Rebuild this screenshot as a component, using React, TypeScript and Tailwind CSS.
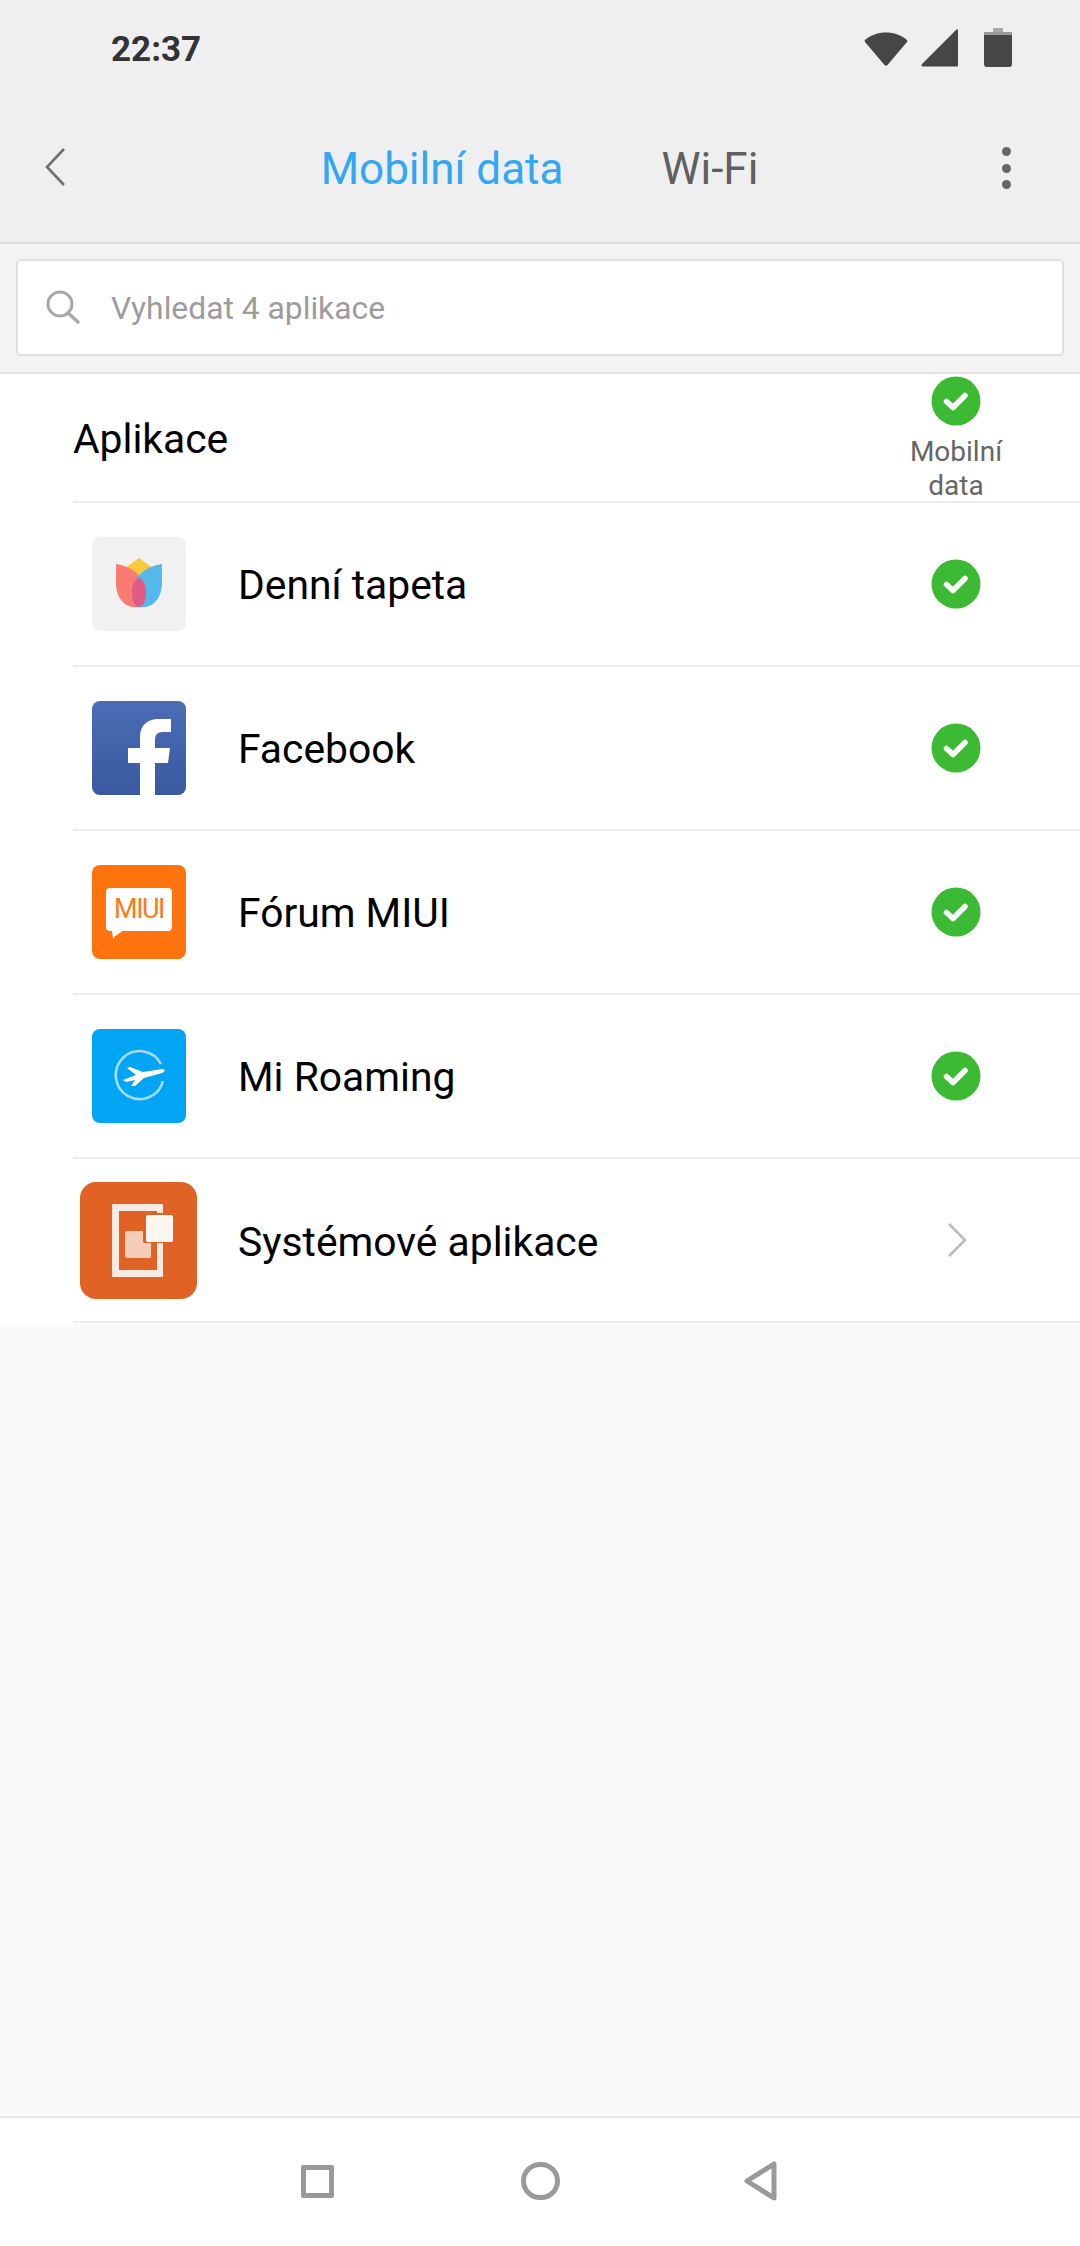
const Check = ({ className = "" }: { className?: string }) => (
  <svg viewBox="0 0 50 50" className={`w-[50px] h-[50px] ${className}`}>
    <circle cx="25" cy="25" r="24.5" fill="#3dba33" />
    <path d="M15.5 25.5 L22 31.5 L34 19.5" fill="none" stroke="#fff" strokeWidth="5.5" strokeLinecap="round" strokeLinejoin="round" />
  </svg>
);

const Tile = ({ children, className }: { children: React.ReactNode; className: string }) => (
  <div className={`w-[94px] h-[94px] rounded-[8px] overflow-hidden ${className}`}>{children}</div>
);

const Tulip = () => (
  <Tile className="bg-[#f1f1f1]">
    <svg viewBox="0 0 94 94" className="w-full h-full">
      <path d="M47 21 L61 31 L47 52 L33 31 Z" fill="#f8cb3e" />
      <path d="M24 27 C38 29 52 38 54 52 C55 62 52 70 47 70 C32 72 24 60 24 46 Z" fill="#fb7a72" />
      <path d="M70 27 C56 29 42 38 40 52 C39 62 42 70 47 70 C62 72 70 60 70 46 Z" fill="#55b9ec" />
      <path d="M47 40 C52 44 54 48 54 54 C54.5 62 52 68 48 70 C47 70.2 46.5 70.2 46 70 C42 68 39.5 62 40 54 C40 48 42 44 47 40 Z" fill="#e25b85" />
    </svg>
  </Tile>
);

const Facebook = () => (
  <Tile className="bg-gradient-to-b from-[#4a6db5] to-[#3a5a9f]">
    <svg viewBox="0 0 94 94" className="w-full h-full">
      <path d="M48 94 V62 H36 V47 H48 V36 C48 24 56 18 66 18 H79 V31 H71 C65 31 63 34 63 39 V47 H78 L76 62 H63 V94 Z" fill="#fff" />
    </svg>
  </Tile>
);

const Miui = () => (
  <Tile className="bg-[#fd740f] flex items-center justify-center">
    <div className="relative w-[66px] h-[43px] mb-[6px] bg-white rounded-[4px] flex items-center justify-center">
      <span className="text-[#fb7a1a] text-[27px] leading-none font-['Roboto',sans-serif] tracking-[-1.5px]">MIUI</span>
      <svg viewBox="0 0 12 10" className="absolute left-[6px] top-[42px] w-[12px] h-[10px]">
        <path d="M0 0 H12 L2 7 L1 9 Z" fill="#fff" />
      </svg>
    </div>
  </Tile>
);

const Roaming = () => (
  <Tile className="bg-[#02a5f3]">
    <svg viewBox="0 0 94 94" className="w-full h-full">
      <path d="M69 35 A24 24 0 1 0 71 52" fill="none" stroke="#a5dcfa" strokeWidth="2.6" />
      <path d="M35 39 L38 38 L51 43 L70 40 C74 40 73 43 70 44 L52 49 L43 57 L39 57 L43 51 L34 53 L31 51 L44 46 Z" fill="#fff" />
    </svg>
  </Tile>
);

const SystemIcon = () => (
  <div className="w-[117px] h-[117px] rounded-[16px] overflow-hidden bg-[#e16225]">
    <svg viewBox="0 0 117 117" className="w-full h-full">
      <rect x="32" y="22" width="51" height="73" rx="1" fill="#f7eae2" />
      <rect x="39" y="29" width="38" height="59" fill="#e16225" />
      <rect x="45" y="49" width="26" height="27" rx="2" fill="#f3cdb5" />
      <rect x="63" y="31" width="30" height="30" rx="2" fill="#e16225" />
      <rect x="66" y="33" width="27" height="27" rx="2" fill="#fbf6f0" />
    </svg>
  </div>
);

const rows = [
  { name: "Denní tapeta", icon: <Tulip /> },
  { name: "Facebook", icon: <Facebook /> },
  { name: "Fórum MIUI", icon: <Miui /> },
  { name: "Mi Roaming", icon: <Roaming /> },
];

export default function App() {
  return (
    <div className="w-[1080px] h-[2246px] flex flex-col bg-[#faf9fb] text-black font-['Roboto',sans-serif] overflow-hidden">
      <header className="h-[244px] shrink-0 bg-[#efefef] border-b-2 border-[#dcdcde] flex flex-col">
        <div className="h-[100px] flex items-center justify-between pl-[111px] pr-[67px] pb-[4px]">
          <span className="text-[35px] font-bold text-[#333] leading-none mt-[2px]">22:37</span>
          <div className="flex items-center gap-[13px]">
            <svg viewBox="0 0 44 38" className="w-[44px] h-[38px]">
              <path d="M1 11 C12 1 32 1 43 11 C43.5 12 43.5 12.5 43 13 L23.5 36 C22.5 37 21.5 37 20.5 36 L1 13 C0.5 12.5 0.5 12 1 11 Z" fill="#464646" />
            </svg>
            <svg viewBox="0 0 38 38" className="w-[38px] h-[38px]">
              <path d="M37 1 V36 C37 37 36.5 37.5 35.5 37.5 H2 C0.5 37.5 0 36.5 1 35 L35 1 C36 0 37 0 37 1 Z" fill="#464646" />
            </svg>
            <svg viewBox="0 0 30 40" className="w-[30px] h-[40px] ml-[11px]">
              <rect x="10" y="0" width="10" height="5" fill="#a8a8a8" />
              <rect x="1" y="4" width="28" height="4" fill="#9a9a9a" />
              <path d="M1 7 H29 V36 C29 38 28 39 26.5 39 H3.5 C2 39 1 38 1 36 Z" fill="#464646" />
            </svg>
          </div>
        </div>
        <div className="flex-1 relative flex items-center justify-center pb-[4px]">
          <svg viewBox="0 0 24 40" className="absolute left-[44px] top-[47px] w-[24px] h-[40px]">
            <path d="M20 2 L3 20 L20 38" fill="none" stroke="#707070" strokeWidth="2.6" />
          </svg>
          <div className="flex items-center gap-[98px] text-[44px] leading-none ml-[-1px]">
            <span className="text-[#33a6f4]">Mobilní data</span>
            <span className="text-[#606060]">Wi-Fi</span>
          </div>
          <div className="absolute left-[1002px] top-[47px] flex flex-col gap-[7.5px]">
            <span className="w-[9px] h-[9px] rounded-full bg-[#666]" />
            <span className="w-[9px] h-[9px] rounded-full bg-[#666]" />
            <span className="w-[9px] h-[9px] rounded-full bg-[#666]" />
          </div>
        </div>
      </header>

      <div className="h-[130px] shrink-0 bg-[#f3f3f4] border-b-2 border-[#e3e3e5] px-[16px] pt-[15px]">
        <div className="h-[97px] bg-white border-2 border-[#e0e0e2] rounded-[5px] flex items-center pl-[27px]">
          <svg viewBox="0 0 36 36" className="w-[36px] h-[36px] mt-[-1px]">
            <circle cx="15" cy="15" r="12" fill="none" stroke="#a8a8a8" strokeWidth="3" />
            <path d="M23 24 L33 33" stroke="#a8a8a8" strokeWidth="3.4" strokeLinecap="round" />
          </svg>
          <span className="ml-[30px] mt-[2px] text-[31.8px] text-[#9c9c9c] leading-none">Vyhledat 4 aplikace</span>
        </div>
      </div>

      <main className="bg-white h-[949px] shrink-0 flex flex-col pl-[73px]">
        <div className="h-[129px] shrink-0 border-b-2 border-[#ececee] flex items-center justify-between relative">
          <span className="text-[40.8px] leading-none mt-[4px]">Aplikace</span>
          <div className="w-[160px] mr-[44px] flex flex-col items-center self-start mt-[2px]">
            <Check />
            <span className="mt-[9px] text-[28px] leading-[34px] text-[#666] text-center">
              Mobilní
              <br />
              data
            </span>
          </div>
        </div>
        {rows.map((r) => (
          <div key={r.name} className="h-[164px] shrink-0 border-b-2 border-[#ececee] flex items-center">
            <div className="ml-[19px] w-[94px] shrink-0">{r.icon}</div>
            <span className="ml-[52px] mt-[3px] text-[40.8px] leading-none flex-1">{r.name}</span>
            <Check className="mr-[99px]" />
          </div>
        ))}
        <div className="h-[164px] shrink-0 border-b-2 border-[#ececee] flex items-center">
          <div className="ml-[7px] w-[117px] shrink-0"><SystemIcon /></div>
          <span className="ml-[41px] mt-[5px] text-[40.8px] leading-none flex-1">Systémové aplikace</span>
          <svg viewBox="0 0 20 36" className="w-[20px] h-[36px] mr-[113px]">
            <path d="M2 2 L18 18 L2 34" fill="none" stroke="#bcbcbc" strokeWidth="2.6" />
          </svg>
        </div>
      </main>

      <div className="flex-1" />

      <footer className="h-[130px] shrink-0 bg-white border-t-2 border-[#e8e8ea] relative flex items-center justify-center pb-[2px]">
        <div className="flex items-center ml-[-2px]">
          <div className="w-[33px] h-[33px] border-[5px] border-[#999] rounded-[2px]" />
          <div className="w-[39px] h-[38px] ml-[187px] border-[5px] border-[#999] rounded-full" />
          <svg viewBox="0 0 34 40" className="w-[34px] h-[40px] ml-[184px]">
            <path d="M30 3 V37 L3 20 Z" fill="none" stroke="#999" strokeWidth="5" strokeLinejoin="round" />
          </svg>
        </div>
      </footer>
    </div>
  );
}
